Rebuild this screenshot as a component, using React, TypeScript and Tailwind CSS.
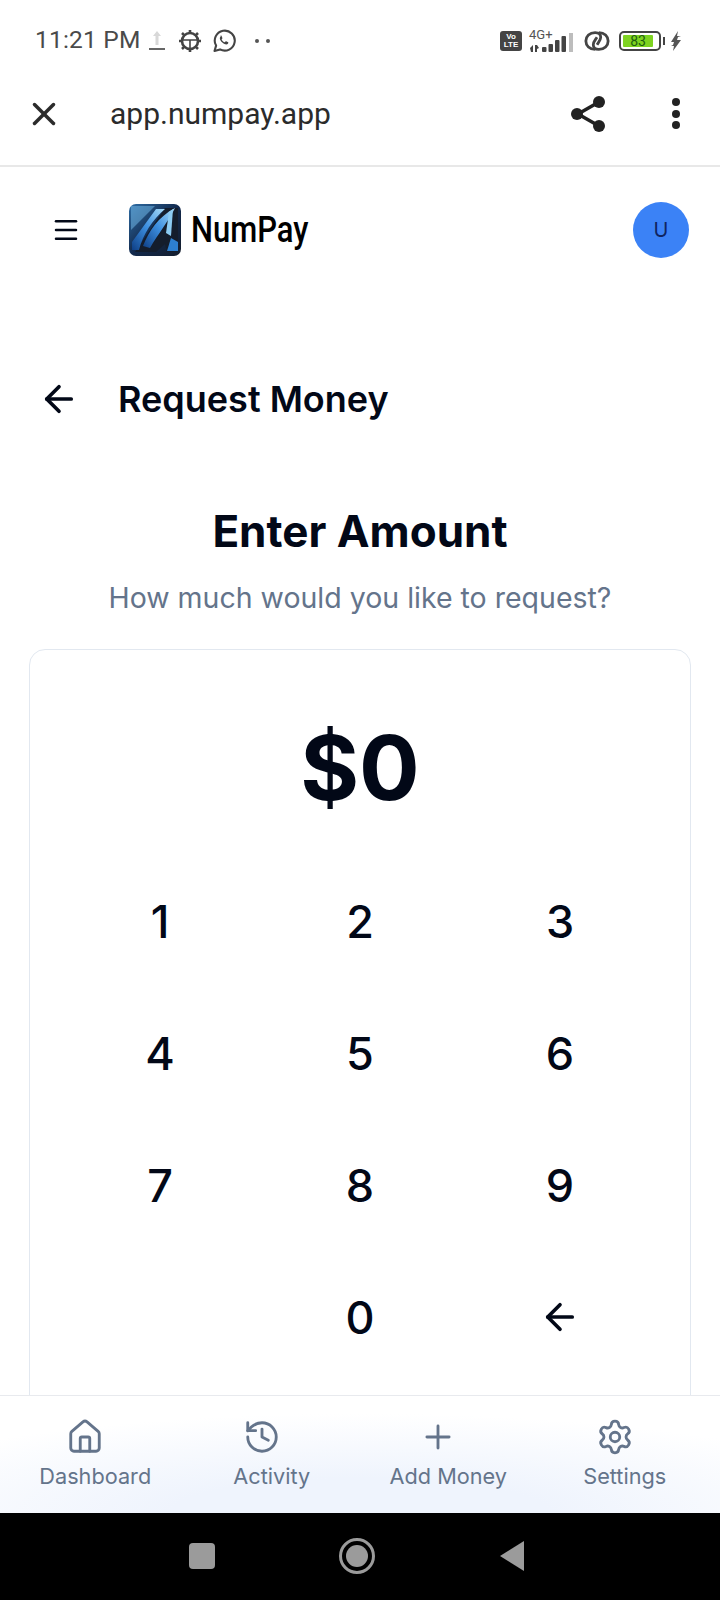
import React from 'react';
import { ArrowLeft, History, House, Menu, Plus, Settings, X } from 'lucide-react';

const keys = ['1', '2', '3', '4', '5', '6', '7', '8', '9', '', '0', 'back'];

const navItems = [
  { label: 'Dashboard', icon: House },
  { label: 'Activity', icon: History },
  { label: 'Add Money', icon: Plus },
  { label: 'Settings', icon: Settings },
];

const StatusBar: React.FC = () => (
  <div className="h-[78px] shrink-0 flex items-center justify-between pl-[35px] pr-[38px] pt-[3px] text-[#444]">
    <div className="flex items-center">
      <span className="text-[24.500px] leading-none font-['Roboto',sans-serif] tracking-[0.2px] text-[#4a4a4a]">11:21 PM</span>
      <svg width="18" height="22" viewBox="0 0 18 22" className="ml-[7px]">
        <path d="M9 1l4 5h-2.500v9h-3V6H5z" fill="#d8d8d8" />
        <rect x="1" y="18" width="16" height="2" fill="#666" />
      </svg>
      <svg width="24" height="24" viewBox="0 0 24 24" className="ml-[12px]" fill="none" stroke="#444">
        <circle cx="12" cy="12" r="8" strokeWidth="2.600" />
        <path d="M12 1v3M12 20v3M1 12h3M20 12h3M4 4l2.400 2.400M17.600 17.600L20 20M4 20l2.400-2.400M17.600 6.400L20 4" strokeWidth="2.600" />
        <path d="M4.500 11h15M12 11v8" strokeWidth="1.600" />
      </svg>
      <svg width="24" height="24" viewBox="0 0 24 24" className="ml-[10px]" fill="none">
        <path d="M2.500 22l1.600-5.400A10 10 0 1 1 8 20.400z" stroke="#444" strokeWidth="2.100" strokeLinejoin="round" />
        <path d="M8.600 7.400c-.9.8-1 2.200-.3 3.700 1 2 2.700 3.500 4.800 4.200 1.300.4 2.400 0 3-.9.300-.5.300-1 .1-1.200l-2-1c-.3-.1-.5 0-.7.200l-.7.900c-1.400-.5-2.500-1.500-3.200-2.900l.7-.8c.2-.2.200-.5.100-.7l-.8-2c-.2-.4-.7-.5-1-.3z" fill="#444" />
      </svg>
      <div className="ml-[19px] flex gap-[7px]">
        <span className="w-[4px] h-[4px] rounded-full bg-[#555]" />
        <span className="w-[4px] h-[4px] rounded-full bg-[#555]" />
      </div>
    </div>
    <div className="flex items-center">
      <div className="w-[22px] h-[20px] rounded-[3px] bg-[#444] flex flex-col items-center justify-center text-white font-['Liberation_Sans',sans-serif] font-bold text-[8px] leading-[8px]">
        <span>Vo</span>
        <span>LTE</span>
      </div>
      <div className="ml-[7px] w-[46px] h-[24px] flex flex-col">
        <span className="text-[13px] leading-[11px] font-['Roboto',sans-serif] text-[#555]">4G+</span>
        <svg width="46" height="20" viewBox="0 0 46 20" className="mt-[-7px]">
          <path d="M1 15l3-3v7H2zM6 12h2l2 3-2 1v3H6z" fill="#444" />
          <rect x="13" y="14" width="4.500" height="5" rx="1" fill="#444" />
          <rect x="19.500" y="11" width="4.500" height="8" rx="1" fill="#444" />
          <rect x="26" y="7" width="4.500" height="12" rx="1" fill="#444" />
          <rect x="32.500" y="3" width="4.500" height="16" rx="1" fill="#444" />
          <rect x="40" y="0" width="4" height="19" fill="#bdbdbd" />
        </svg>
      </div>
      <svg width="26" height="24" viewBox="0 0 28 24" fill="none" stroke="#444" strokeWidth="3" className="ml-[9px]">
        <path d="M12 21C6 21 2 17 2 12S6 3 12 3c4 0 6 2 6 5s-2 5-4 8" />
        <path d="M16 3c6 0 10 4 10 9s-4 9-10 9c-4 0-6-2-6-5s2-5 4-8" />
      </svg>
      <div className="ml-[9px] w-[42px] h-[20px] rounded-[5px] border-2 border-[#444] p-[2px]">
        <div className="w-[30px] h-full bg-[#7ed321] rounded-[1px] flex items-center justify-center text-[14px] leading-none font-['Roboto',sans-serif] text-[#1d5e10]">83</div>
      </div>
      <span className="ml-[2px] w-[2px] h-[8px] bg-[#444]" />
      <svg width="12" height="20" viewBox="0 0 12 20" className="ml-[5px]">
        <path d="M8 0L1 11h3l-1 3-2 1h3l-1 5 8-11H7l1-3 3-1H7z" fill="#555" />
      </svg>
    </div>
  </div>
);

const BrowserBar: React.FC = () => (
  <div className="h-[89px] shrink-0 flex items-center pl-[25px] pr-[40px] pb-[16px] border-b-2 border-[#e8e8e8] text-[#2b2b2b]">
    <X size={38} strokeWidth={2.200} />
    <span className="ml-[47px] text-[30px] leading-none font-['Roboto',sans-serif]">app.numpay.app</span>
    <div className="ml-auto flex items-center">
      <svg width="36" height="38" viewBox="0 0 36 38">
        <path d="M28 7L7 19l21 12" fill="none" stroke="#222" strokeWidth="3.500" />
        <circle cx="28" cy="7" r="6" fill="#222" />
        <circle cx="6" cy="19" r="6" fill="#222" />
        <circle cx="28" cy="31" r="6" fill="#222" />
      </svg>
      <div className="ml-[65px] w-[8px] flex flex-col gap-[3.500px]">
        <span className="w-[8px] h-[8px] rounded-full bg-[#222]" />
        <span className="w-[8px] h-[8px] rounded-full bg-[#222]" />
        <span className="w-[8px] h-[8px] rounded-full bg-[#222]" />
      </div>
    </div>
  </div>
);

const Logo: React.FC = () => (
  <svg width="52" height="52" viewBox="0 0 52 52" className="rounded-[7px]">
    <defs>
      <linearGradient id="bg" x1="0" y1="0" x2="1" y2="1">
        <stop offset="0" stopColor="#2f6ea6" />
        <stop offset="0.5" stopColor="#12294d" />
        <stop offset="1" stopColor="#141d2c" />
      </linearGradient>
      <linearGradient id="streak" x1="1" y1="0" x2="0" y2="1">
        <stop offset="0" stopColor="#a9dcf7" />
        <stop offset="0.5" stopColor="#3d8fe0" />
        <stop offset="1" stopColor="#0e3f86" />
      </linearGradient>
    </defs>
    <rect width="52" height="52" fill="url(#bg)" />
    <path d="M2 2h24L2 26z" fill="#6fb4e4" opacity="0.55" />
    <path d="M6 48L36 4h13v44H38l-2-8-9 8z" fill="#141d2c" />
    <path d="M3 38L27 5h9C24 15 14 30 10 46H3z" fill="url(#streak)" />
    <path d="M14 42C20 27 29 13 46 4 39 18 29 30 21 44z" fill="url(#streak)" />
    <path d="M40 8l4-3-2 27-5-3z" fill="#8ccbf2" />
    <path d="M38 47l4-13 7 4v9z" fill="#2d7fd0" />
  </svg>
);

const AppHeader: React.FC = () => (
  <div className="h-[126px] flex items-center pl-[51px] pr-[31px] text-[#020817]">
    <Menu size={30} strokeWidth={2} className="shrink-0" />
    <div className="ml-[48px]">
      <Logo />
    </div>
    <span className="ml-[10px] text-[36px] leading-none font-medium font-['Roboto',sans-serif] text-black origin-left scale-x-[0.86] w-[120px]">NumPay</span>
    <div className="ml-auto w-[56px] h-[56px] rounded-full bg-[#3b82f6] flex items-center justify-center text-[20px] font-['Inter',sans-serif] text-[#0f2460]">U</div>
  </div>
);

const Keypad: React.FC = () => (
  <div className="mt-[81px] grid grid-cols-3 gap-y-[88px] px-[30px]">
    {keys.map((key, i) => (
      <div key={i} className="h-[44px] flex items-center justify-center text-[45px] leading-none font-medium text-[#020817]">
        {key === 'back' ? <ArrowLeft size={42} strokeWidth={2.100} /> : key}
      </div>
    ))}
  </div>
);

const BottomNav: React.FC = () => (
  <div className="h-[118px] shrink-0 grid grid-cols-4 pt-[22px] px-[7px] border-t border-[#e8eaee] bg-[radial-gradient(ellipse_75%_85%_at_50%_100%,#eff4fd_35%,#ffffff_100%)]">
    {navItems.map(({ label, icon: Icon }) => (
      <div key={label} className="flex flex-col items-center text-[#64748b]">
        <Icon size={38} strokeWidth={1.800} className="mr-[20px]" />
        <span className="mt-[5px] text-[21.700px] leading-[30px]">{label}</span>
      </div>
    ))}
  </div>
);

const AndroidNav: React.FC = () => (
  <div className="h-[87px] shrink-0 bg-black flex items-center justify-center pb-[2px] pr-[6px]">
    <span className="w-[26px] h-[26px] rounded-[4px] bg-[#9b9b9b]" />
    <span className="ml-[124px] w-[36px] h-[36px] rounded-full border-[3px] border-[#9b9b9b] flex items-center justify-center">
      <span className="w-[22px] h-[22px] rounded-full bg-[#9b9b9b]" />
    </span>
    <svg width="26" height="32" viewBox="0 0 26 32" className="ml-[124px]">
      <path d="M25 1v30L1 16z" fill="#9b9b9b" />
    </svg>
  </div>
);

const App: React.FC = () => {
  return (
    <div className="w-[720px] h-[1600px] flex flex-col bg-white overflow-hidden font-['Inter',sans-serif]">
      <StatusBar />
      <BrowserBar />
      <div className="flex-1 min-h-0 overflow-hidden">
        <AppHeader />
        <div className="mt-[81px] flex items-center pl-[38px] text-[#020817]">
          <ArrowLeft size={42} strokeWidth={2.100} />
          <h1 className="ml-[38px] text-[36px] leading-[50px] font-semibold">Request Money</h1>
        </div>
        <h2 className="mt-[78px] text-center text-[44px] leading-[58px] font-bold text-[#020817]">Enter Amount</h2>
        <p className="mt-[18px] text-center text-[28.500px] leading-[40px] text-[#64748b]">How much would you like to request?</p>
        <div className="mt-[31px] mx-[29px] h-[800px] rounded-[16px] border border-[#e2e8f0] bg-white">
          <div className="pt-[68px] text-center text-[90px] leading-[100px] font-bold text-[#020817]">$0</div>
          <Keypad />
        </div>
      </div>
      <BottomNav />
      <AndroidNav />
    </div>
  );
};

export default App;
